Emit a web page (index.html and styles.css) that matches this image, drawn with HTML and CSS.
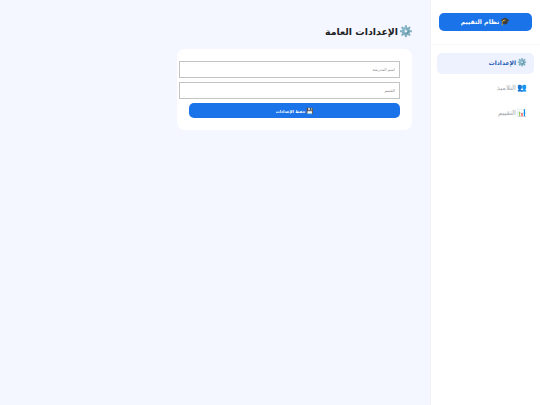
FILE: index.html
```html
<!DOCTYPE html>
<html lang="ar" dir="rtl">
<head>
    <meta charset="UTF-8">
    <title>نظام التقييم</title>
    <link rel="stylesheet" href="styles.css">
</head>
<body>
    <div class="app">
        <aside class="sidebar">
            <div class="logo-wrap">
                <div class="logo"><span class="emoji">🎓</span>نظام التقييم</div>
            </div>
            <nav class="nav">
                <div class="nav-item active"><span class="emoji">⚙️</span>الإعدادات</div>
                <div class="nav-item"><span class="emoji">👥</span>التلاميذ</div>
                <div class="nav-item"><span class="emoji">📊</span>التقييم</div>
            </nav>
        </aside>
        <main class="content">
            <h1 class="title"><span class="title-emoji">⚙️</span>الإعدادات العامة</h1>
            <div class="card">
                <input class="field" type="text" placeholder="اسم المدرسة">
                <input class="field" type="text" placeholder="القسم">
                <button class="save-btn"><span class="btn-emoji">💾</span>حفظ الإعدادات</button>
            </div>
        </main>
    </div>
</body>
</html>
```
FILE: styles.css
```css
* {
    box-sizing: border-box;
}

html, body {
    height: 100%;
}

body {
    margin: 0;
    font-family: "DejaVu Sans", sans-serif;
    background-color: #f4f7ff;
}

.app {
    display: flex;
    height: 405px;
}

/* sidebar on the right because of rtl */
.sidebar {
    width: 110px;
    background-color: #fff;
    border-left: 1px solid #f0f2f8;
    padding: 13px 6px 0 6px;
}

.logo-wrap {
    margin: 0 -6px;
    padding: 0 8px 13px 8px;
    border-bottom: 1px solid #f6f7fb;
}

.logo {
    height: 18px;
    border-radius: 5px;
    background-color: #1a73e8;
    color: #fff;
    font-size: 6.2px;
    font-weight: bold;
    line-height: 18px;
    text-align: center;
}

.emoji {
    margin-left: 1px;
    font-size: 8px;
}

.nav {
    display: flex;
    flex-direction: column;
    gap: 4px;
    margin-top: 8px;
}

.nav-item {
    height: 21px;
    padding: 0 7px;
    border-radius: 5px;
    color: #a3a7ae;
    font-size: 6.8px;
    line-height: 19px;
}

.nav-item.active {
    background-color: #edf2fe;
    color: #1a56b0;
    font-size: 6px;
    font-weight: bold;
}

.content {
    flex: 1;
    padding: 24px 18px 0 0;
}

.title {
    margin: 0 -1px 10px 0;
    color: #222;
    font-size: 9.4px;
    font-weight: bold;
    line-height: 15px;
}

.title-emoji {
    margin-left: 1px;
    font-size: 11px;
}

.card {
    display: flex;
    flex-direction: column;
    width: 235px;
    height: 81px;
    padding: 12px 12px 12px 2px;
    border-radius: 8px;
    background-color: #fff;
}

.field {
    height: 17px;
    margin: 0 0 4px 0;
    padding: 0 4px;
    border: 1px solid #c4c4c4;
    background-color: #fff;
    font-family: "DejaVu Sans", sans-serif;
    font-size: 4px;
}

.field::placeholder {
    color: #888;
}

.save-btn {
    height: 15px;
    margin-left: 10px;
    border: 0;
    border-radius: 5px;
    background-color: #1a73e8;
    color: #fff;
    font-family: "DejaVu Sans", sans-serif;
    font-size: 4px;
    font-weight: bold;
}

.btn-emoji {
    margin-left: 1px;
    font-size: 6px;
}
```
